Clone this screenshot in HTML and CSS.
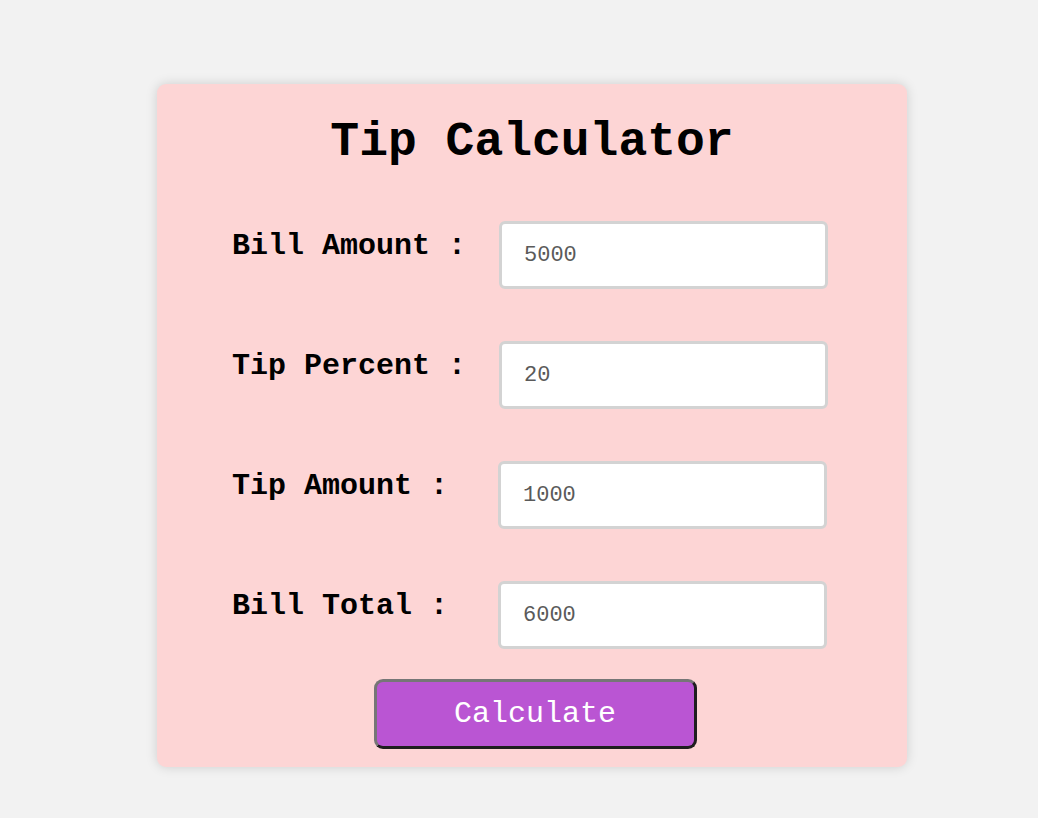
FILE: index.html
```html
<!DOCTYPE html>
<html>
<head>
<meta charset="utf-8">
<title>Tip Calculator</title>
<link rel="stylesheet" href="styles.css">
</head>
<body>
<main class="page">
  <section class="card">
    <h1 class="title">Tip Calculator</h1>
    <div class="form">
      <label class="label" for="bill">Bill Amount :</label>
      <input class="field" id="bill" type="text" value="5000">
      <label class="label" for="pct">Tip Percent :</label>
      <input class="field" id="pct" type="text" value="20">
      <label class="label" for="tip">Tip Amount :</label>
      <input class="field shift" id="tip" type="text" value="1000" readonly>
      <label class="label" for="total">Bill Total :</label>
      <input class="field shift" id="total" type="text" value="6000" readonly>
    </div>
    <button class="btn" type="button">Calculate</button>
  </section>
</main>
</body>
</html>
```

FILE: styles.css
```css
* { box-sizing: border-box; }
html, body { margin: 0; padding: 0; }
body {
  background: #f2f2f2;
  font-family: "Liberation Mono", "Courier New", monospace;
  width: 1038px;
  height: 818px;
  overflow: hidden;
}
.page {
  display: flex;
  justify-content: center;
  padding-top: 84px;
}
.card {
  width: 750px;
  height: 683px;
  margin-left: 26px;
  background: #fdd5d5;
  border-radius: 9px;
  box-shadow: 0 0 12px rgba(0, 0, 0, 0.15);
  padding: 34px 0 0;
  display: flex;
  flex-direction: column;
  align-items: center;
}
.title {
  margin: 0;
  font-size: 48px;
  line-height: 48px;
  font-weight: bold;
  color: #000;
}
.form {
  margin-top: 55px;
  display: grid;
  grid-template-columns: 267px 329px;
  row-gap: 52px;
  margin-left: -4px;
}
.label {
  font-size: 30px;
  line-height: 30px;
  font-weight: bold;
  color: #000;
  margin-top: 10px;
  white-space: pre;
}
.field {
  width: 329px;
  height: 68px;
  border: 3px solid #d3d3d3;
  border-radius: 6px;
  background: #fff;
  padding: 0 22px;
  font-family: "Liberation Mono", "Courier New", monospace;
  font-size: 22px;
  color: #5a5a5a;
  outline: none;
}
.field.shift {
  margin-left: -1px;
}
.btn {
  margin-top: 30px;
  margin-left: 6px;
  width: 323px;
  height: 70px;
  background: #ba55d3;
  border: 3px solid;
  border-color: #767676 #1e1e1e #1e1e1e #767676;
  border-radius: 9px;
  font-family: "Liberation Mono", "Courier New", monospace;
  font-size: 30px;
  color: #fff;
  padding: 0;
}
```
